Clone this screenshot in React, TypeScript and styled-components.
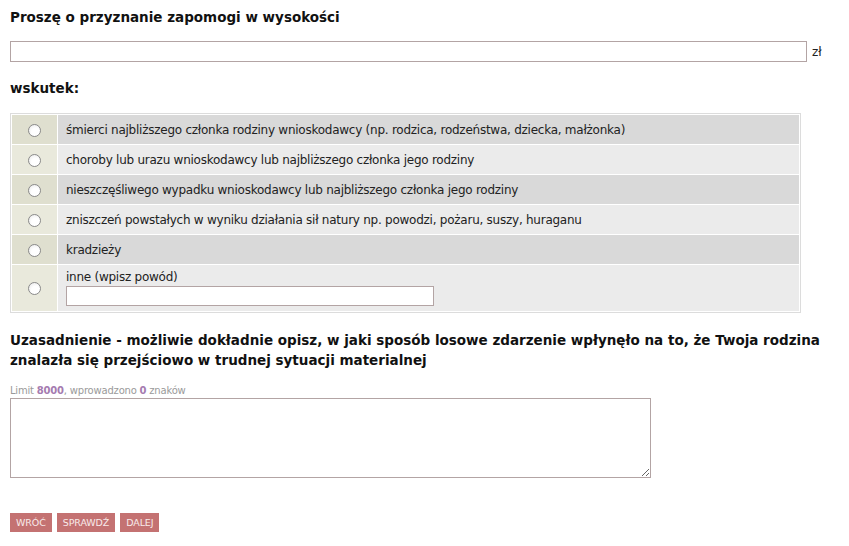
import React from 'react'
import styled, { createGlobalStyle } from 'styled-components'

const GlobalStyle = createGlobalStyle`
    body {
        margin: 0;
        background: #ffffff;
        font-family: "DejaVu Sans", Verdana, sans-serif;
        color: #222222;
    }
`

const Page = styled.div`
    padding: 7px 10px 0 10px;
    width: 829px;
`

const Heading = styled.h2<{ $top?: number }>`
    font-size: 13.5px;
    font-weight: bold;
    line-height: 20px;
    margin: ${(p) => p.$top ?? 0}px 0 0 0;
    color: #111111;
`

const AmountRow = styled.div`
    display: flex;
    align-items: center;
    gap: 5px;
    margin-top: 14px;
    font-size: 12px;
`

const TextInput = styled.input<{ $width: number }>`
    box-sizing: border-box;
    width: ${(p) => p.$width}px;
    height: 21px;
    border: 1px solid #b3a4a4;
    background: #ffffff;
    margin: 0;
    padding: 0 3px;
    font-family: inherit;
`

const Table = styled.table`
    margin-top: 15px;
    width: 791px;
    border: 1px solid #dcdcdc;
    border-spacing: 1px;
    font-size: 12px;
    letter-spacing: -0.25px;
`

const RadioCell = styled.td<{ $even: boolean }>`
    width: 45px;
    padding: 0;
    text-align: center;
    vertical-align: middle;
    background: ${(p) => (p.$even ? '#e9e9dc' : '#dfdfcf')};
`

const TextCell = styled.td<{ $even: boolean; $tall?: boolean }>`
    height: ${(p) => (p.$tall ? 46 : 29)}px;
    padding: ${(p) => (p.$tall ? '5px 0 5px 8px' : '0 0 0 8px')};
    box-sizing: border-box;
    vertical-align: middle;
    background: ${(p) => (p.$even ? '#ebebeb' : '#d9d9d9')};
`

const Radio = styled.input`
    appearance: none;
    width: 13px;
    height: 13px;
    margin: 0;
    border: 1px solid #8a8a8a;
    border-radius: 50%;
    background: radial-gradient(circle at 60% 65%, #ffffff 40%, #e6e6e6 100%);
    vertical-align: middle;
`

const OtherLabel = styled.div`
    line-height: 14px;
    margin-bottom: 2px;
`

const Limit = styled.div`
    margin-top: 14px;
    font-size: 10px;
    line-height: 14px;
    color: #9a9a9a;
    letter-spacing: -0.2px;
`

const Num = styled.b`
    color: #a57bb0;
`

const TextArea = styled.textarea`
    display: block;
    box-sizing: border-box;
    width: 641px;
    height: 80px;
    margin: 0;
    border: 1px solid #b3a4a4;
    resize: both;
    overflow-y: scroll;
    font-family: inherit;

    &::-webkit-scrollbar {
        width: 16px;
    }
    &::-webkit-scrollbar-track {
        background: #eeeeee;
    }
    &::-webkit-scrollbar-corner {
        background: #ffffff;
    }
`

const Buttons = styled.div`
    display: flex;
    gap: 5px;
    margin-top: 35px;
`

const Button = styled.button`
    height: 19px;
    padding: 0 6px;
    border: none;
    background: #c47272;
    color: #f8eaea;
    font-family: "DejaVu Sans", Verdana, sans-serif;
    font-size: 9.5px;
    letter-spacing: -0.1px;
    cursor: pointer;
`

const reasons = [
    'śmierci najbliższego członka rodziny wnioskodawcy (np. rodzica, rodzeństwa, dziecka, małżonka)',
    'choroby lub urazu wnioskodawcy lub najbliższego członka jego rodziny',
    'nieszczęśliwego wypadku wnioskodawcy lub najbliższego członka jego rodziny',
    'zniszczeń powstałych w wyniku działania sił natury np. powodzi, pożaru, suszy, huraganu',
    'kradzieży',
]

const App = () => {
    return (
        <>
            <GlobalStyle />
            <Page>
                <Heading>Proszę o przyznanie zapomogi w wysokości</Heading>
                <AmountRow>
                    <TextInput $width={797} type="text" />
                    <span>zł</span>
                </AmountRow>
                <Heading $top={16}>wskutek:</Heading>
                <Table>
                    <tbody>
                        {reasons.map((text, index) => (
                            <tr key={index}>
                                <RadioCell $even={index % 2 === 1}>
                                    <Radio type="radio" name="reason" />
                                </RadioCell>
                                <TextCell $even={index % 2 === 1}>{text}</TextCell>
                            </tr>
                        ))}
                        <tr>
                            <RadioCell $even={true}>
                                <Radio type="radio" name="reason" />
                            </RadioCell>
                            <TextCell $even={true} $tall>
                                <OtherLabel>inne (wpisz powód)</OtherLabel>
                                <TextInput $width={368} type="text" style={{ height: 20 }} />
                            </TextCell>
                        </tr>
                    </tbody>
                </Table>
                <Heading $top={17}>
                    Uzasadnienie - możliwie dokładnie opisz, w jaki sposób losowe zdarzenie
                    wpłynęło na to, że Twoja rodzina znalazła się przejściowo w trudnej
                    sytuacji materialnej
                </Heading>
                <Limit>
                    Limit <Num>8000</Num>, wprowadzono <Num>0</Num> znaków
                </Limit>
                <TextArea />
                <Buttons>
                    <Button>WRÓĆ</Button>
                    <Button>SPRAWDŹ</Button>
                    <Button>DALEJ</Button>
                </Buttons>
            </Page>
        </>
    )
}

export default App
